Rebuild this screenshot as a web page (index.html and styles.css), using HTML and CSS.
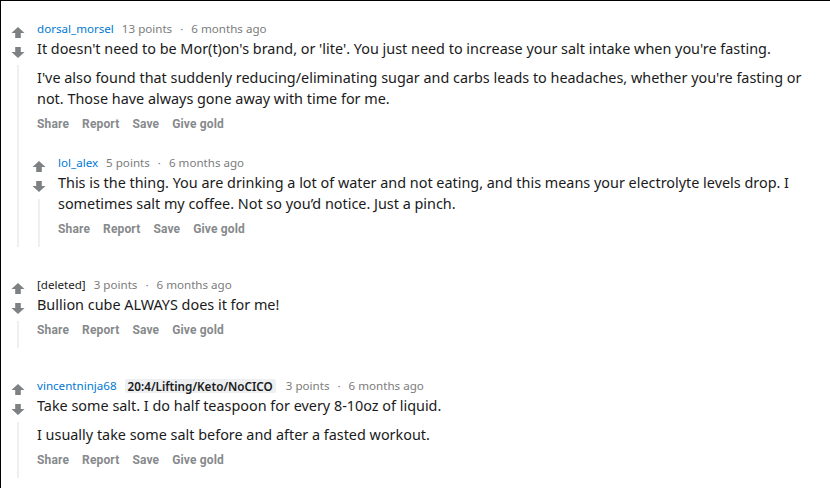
FILE: index.html
```html
<!DOCTYPE html>
<html lang="en">
<head>
<meta charset="utf-8">
<title>Comments</title>
<link rel="stylesheet" href="styles.css">
</head>
<body>
<div class="page">

  <div class="comment">
    <div class="rail">
      <span class="vote"><svg viewBox="0 0 14 11" width="14" height="11"><path d="M7 0L13.5 6H9.8V11H4.2V6H0.5Z"/></svg></span>
      <span class="vote down"><svg viewBox="0 0 14 11" width="14" height="11"><path d="M7 11L13.5 5H9.8V0H4.2V5H0.5Z"/></svg></span>
      <span class="thread-line"></span>
    </div>
    <div class="main">
      <div class="meta"><a class="user">dorsal_morsel</a><span class="points">13 points</span><span class="sep">·</span><span class="time">6 months ago</span></div>
      <div class="body">
        <p>It doesn't need to be Mor(t)on's brand, or 'lite'. You just need to increase your salt intake when you're fasting.</p>
        <p>I've also found that suddenly reducing/eliminating sugar and carbs leads to headaches, whether you're fasting or not. Those have always gone away with time for me.</p>
      </div>
      <div class="actions"><span>Share</span><span>Report</span><span>Save</span><span>Give gold</span></div>
      <div class="children">
        <div class="comment">
          <div class="rail">
            <span class="vote"><svg viewBox="0 0 14 11" width="14" height="11"><path d="M7 0L13.5 6H9.8V11H4.2V6H0.5Z"/></svg></span>
            <span class="vote down"><svg viewBox="0 0 14 11" width="14" height="11"><path d="M7 11L13.5 5H9.8V0H4.2V5H0.5Z"/></svg></span>
            <span class="thread-line"></span>
          </div>
          <div class="main">
            <div class="meta"><a class="user">lol_alex</a><span class="points">5 points</span><span class="sep">·</span><span class="time">6 months ago</span></div>
            <div class="body">
              <p>This is the thing. You are drinking a lot of water and not eating, and this means your electrolyte levels drop. I sometimes salt my coffee. Not so you’d notice. Just a pinch.</p>
            </div>
            <div class="actions"><span>Share</span><span>Report</span><span>Save</span><span>Give gold</span></div>
          </div>
        </div>
      </div>
    </div>
  </div>

  <div class="comment">
    <div class="rail">
      <span class="vote"><svg viewBox="0 0 14 11" width="14" height="11"><path d="M7 0L13.5 6H9.8V11H4.2V6H0.5Z"/></svg></span>
      <span class="vote down"><svg viewBox="0 0 14 11" width="14" height="11"><path d="M7 11L13.5 5H9.8V0H4.2V5H0.5Z"/></svg></span>
      <span class="thread-line"></span>
    </div>
    <div class="main">
      <div class="meta"><span class="deleted">[deleted]</span><span class="points">3 points</span><span class="sep">·</span><span class="time">6 months ago</span></div>
      <div class="body">
        <p>Bullion cube ALWAYS does it for me!</p>
      </div>
      <div class="actions"><span>Share</span><span>Report</span><span>Save</span><span>Give gold</span></div>
    </div>
  </div>

  <div class="comment">
    <div class="rail">
      <span class="vote"><svg viewBox="0 0 14 11" width="14" height="11"><path d="M7 0L13.5 6H9.8V11H4.2V6H0.5Z"/></svg></span>
      <span class="vote down"><svg viewBox="0 0 14 11" width="14" height="11"><path d="M7 11L13.5 5H9.8V0H4.2V5H0.5Z"/></svg></span>
      <span class="thread-line"></span>
    </div>
    <div class="main">
      <div class="meta"><a class="user">vincentninja68</a><span class="flair">20:4/Lifting/Keto/NoCICO</span><span class="points">3 points</span><span class="sep">·</span><span class="time">6 months ago</span></div>
      <div class="body">
        <p>Take some salt. I do half teaspoon for every 8-10oz of liquid.</p>
        <p>I usually take some salt before and after a fasted workout.</p>
      </div>
      <div class="actions"><span>Share</span><span>Report</span><span>Save</span><span>Give gold</span></div>
    </div>
  </div>

</div>
</body>
</html>
```

FILE: styles.css
```css
html, body {
  margin: 0;
  padding: 0;
  background: #ffffff;
}

.page {
  box-sizing: border-box;
  height: 488px;
  border-top: 1px solid #000000;
  border-left: 1px solid #000000;
  padding: 20px 10px 0 6px;
  font-family: "Noto Sans", "Open Sans", sans-serif;
  color: #1a1a1b;
  overflow: hidden;
}

.comment {
  display: grid;
  grid-template-columns: 21px 1fr;
}

.page > .comment + .comment {
  margin-top: 30px;
}

.rail {
  display: flex;
  flex-direction: column;
  align-items: center;
  padding-top: 6px;
}

.vote {
  display: block;
  width: 14px;
  height: 11px;
  fill: #7e8183;
}

.vote svg {
  display: block;
}

.vote.down {
  margin-top: 9px;
}

.thread-line {
  flex: 1;
  width: 2px;
  margin-top: 7px;
  background: #edeff1;
}

.meta,
.body,
.actions {
  padding-left: 9px;
}

.meta {
  display: flex;
  align-items: center;
  height: 16px;
  font-size: 11.6px;
  line-height: 16px;
  color: #7c7c7c;
}

.user {
  color: #0079d3;
  margin-right: 8px;
}

.deleted {
  color: #1a1a1b;
  margin-right: 8px;
}

.flair {
  background: #edeff1;
  color: #1a1a1b;
  font-size: 11.7px;
  font-weight: 600;
  line-height: 14px;
  padding: 0 3px;
  border-radius: 2px;
  margin-right: 10px;
}

.sep {
  margin: 0 8px 0 8px;
}

.body {
  margin-top: 1px;
  font-size: 14.4px;
  line-height: 21px;
}

.body p {
  margin: 0;
}

.body p + p {
  margin-top: 8px;
}

.actions {
  display: flex;
  gap: 13px;
  margin-top: 7px;
  margin-bottom: 10px;
  font-family: Roboto, "Noto Sans", sans-serif;
  font-weight: 700;
  font-size: 12px;
  letter-spacing: 0.15px;
  line-height: 16px;
  color: #878a8c;
}

.children {
  margin-top: 23px;
}
```
